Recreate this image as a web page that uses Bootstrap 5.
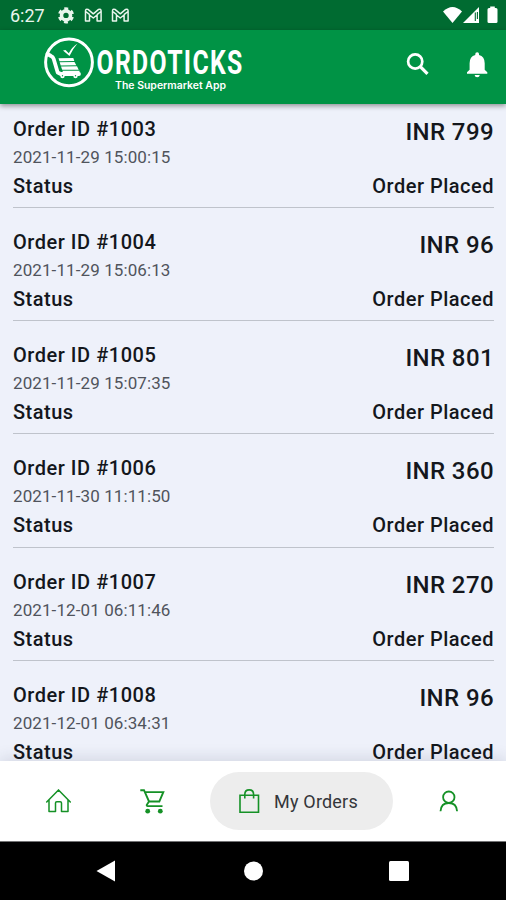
<!DOCTYPE html>
<html lang="en">
<head>
<meta charset="utf-8">
<meta name="viewport" content="width=device-width, initial-scale=1">
<title>Ordoticks - My Orders</title>
<link href="https://cdn.jsdelivr.net/npm/bootstrap@5.3.0/dist/css/bootstrap.min.css" rel="stylesheet">
<style>
body{font-family:Roboto,"Liberation Sans",sans-serif;background:#eef1fa;color:#14171c;height:900px}
svg{display:block;flex:none}
.sysbar{height:30px;background:#006b31;padding:0 8px 0 10px}
.clock{font-size:18px;line-height:30px;width:48px;padding-top:2px;color:#e9f5ed}
.appbar{height:74px;background:#009345;box-shadow:0 2px 5px rgba(0,0,0,.4);z-index:2}
.orders{padding:0 12px 0 13px}
.order{height:113.2px;border-bottom:1.500px solid #bfc3cb;padding-top:22px}
.order:first-child{height:104px;padding-top:12.800px}
.oid,.ostat{font-size:20px;font-weight:500;line-height:24px;letter-spacing:.53px}
.odate{font-size:17px;line-height:20px;margin:6px 0 7px;letter-spacing:.1px;color:#50545c}
.ostat{letter-spacing:.5px}
.amount{font-size:24px;font-weight:500;line-height:30px;margin-bottom:27px;letter-spacing:.4px}
.tabs{height:80px;background:#fff;box-shadow:0 -3px 14px rgba(40,50,80,.13);padding:11px 46px 0 45px;z-index:2}
.tabs a{height:58px}
.pill{background:#ededed;width:183px;padding-left:26px;color:#34363a;font-size:18px;letter-spacing:.2px}
.keys{height:59px;background:#000;border-top:1px solid #777;padding:0 97px 0 96px}
</style>
</head>
<body class="d-flex flex-column overflow-hidden">
<header class="sysbar d-flex align-items-center flex-shrink-0">
  <span class="clock">6:27</span>
  <svg width="74" height="30" viewBox="58 0 74 30">
    <g fill="none" stroke="#e9f5ed"><circle cx="66" cy="15.400" r="4.500" stroke-width="3.600"/><circle cx="66" cy="15.400" r="6.700" stroke-width="2.700" stroke-dasharray="3.800 3.216" stroke-dashoffset="-1.600"/>
    <g stroke-width="1.500" stroke-linejoin="round"><path id="mail" d="M85.500 21V11q0-2.500 2.500-1.600l5.300 4.400 5.300-4.400q2.500-.9 2.500 1.600v10h-4v-6l-3.800 3-3.800-3v6zM85.700 11.500l4 3.200M101 11.500l-4 3.200"/><use href="#mail" x="27"/></g></g>
  </svg>
  <svg class="ms-auto" width="58" height="30" viewBox="440 0 58 30" fill="#fff">
    <path d="M443 11.500Q452.500 2.500 462 11.500L452.500 23z"/>
    <path d="M463 23L479 7V23z"/><path d="M475.300 12.500V21M477.400 12V19" stroke="#006b31" stroke-width="1.100"/>
    <path d="M487.500 9.500q0-1.500 1.500-1.500h1.200V6.500h4.600V8h1.200q1.500 0 1.500 1.500v12.200q0 1.300-1.500 1.300h-7q-1.500 0-1.500-1.300z"/>
  </svg>
</header>
<nav class="appbar d-flex position-relative flex-shrink-0" aria-label="Ordoticks">
  <svg width="506" height="74" viewBox="0 30 506 74">
    <circle cx="69" cy="62.300" r="23.400" fill="none" stroke="#fff" stroke-width="3"/>
    <path d="M47.500 54l3.500 2q2 .7 2.700 3l4 13.500 3 1.500H79" fill="none" stroke="#fff" stroke-width="3.800" stroke-linecap="round" stroke-linejoin="round"/>
    <g fill="#fff"><path d="M58.500 58.300l14.800-.4 1 3.100-14.800.3zM59.700 62.300l14.800-.3 1.800 3.300-15.600.2zM61 66.500l16-.2 1.700 3.400-16.500.1zM62.500 70.800h17v2.100H63z"/><circle cx="62.500" cy="76" r="2.200"/><circle cx="75.500" cy="76" r="2.200"/><path d="M63 50.500l2.500-.5 3.300 3.300Q72 47 77.500 43.500 73 48.500 69.500 56z"/></g>
    <circle cx="62.500" cy="75.800" r=".7" fill="#009345"/><circle cx="75.500" cy="75.800" r=".7" fill="#009345"/>
    <text transform="translate(96.500 73.800) scale(.74 1)" font-size="33.500" font-weight="700" fill="#fff" textLength="197" lengthAdjust="spacing">ORDOTICKS</text>
    <text x="115" y="89.300" font-family="Inter,sans-serif" font-size="10" font-weight="600" fill="#fff" textLength="111" lengthAdjust="spacingAndGlyphs">The Supermarket App</text>
    <circle cx="415.200" cy="61.500" r="7.100" fill="none" stroke="#fff" stroke-width="2.700"/><path d="M420.300 66.600l7.200 7.300" stroke="#fff" stroke-width="3.200"/>
    <path fill="#fff" d="M467 73.700v-1.400l2.600-2.500v-6.600q0-6.600 5.700-8.200V54q0-1.800 1.900-1.800T479 54v1q5.700 1.600 5.700 8.200v6.600l2.600 2.500v1.400zM474.600 75h5.200q-.3 2.300-2.600 2.300t-2.600-2.300z"/>
  </svg>
</nav>
<main class="orders flex-fill overflow-hidden" id="orders"></main>
<nav class="tabs d-flex flex-shrink-0 position-relative">
  <a href="#" class="d-block" aria-label="Home"><svg width="27" height="58" viewBox="45 772 27 58" fill="none" stroke="#159126" stroke-width="1.500" stroke-linejoin="round" stroke-linecap="round"><path d="M46.700 802L58.500 789.900 70.300 802M49 800v11.500h6.500V803q0-1.300 1.300-1.300h3.400q1.300 0 1.300 1.300v8.500H68V800"/></svg></a>
  <a href="#" class="d-block" aria-label="Cart"><svg width="138" height="58" viewBox="72 772 138 58" fill="none" stroke="#159126" stroke-width="1.900"><path d="M140.300 790.200h3.700l5 11.300h10.300l4-9.400h-18.400M149 801.500l-2.200 3.300q-.4 1.300 1 1.300h14.700"/><g fill="#159126" stroke="none"><circle cx="147.700" cy="811.200" r="2.400"/><circle cx="160.300" cy="811.200" r="2.400"/></g></svg></a>
  <a href="#" class="pill rounded-pill d-flex align-items-center text-decoration-none"><svg width="38" height="58" viewBox="236 772 38 58" fill="none" stroke="#159126" stroke-width="1.600"><path d="M240 795.300h18.500v17H240zM244.800 798.500v-4q0-4.600 4.400-4.600t4.400 4.600v4"/></svg><span>My Orders</span></a>
  <a href="#" class="d-block ms-auto" aria-label="Profile"><svg width="22" height="58" viewBox="438 772 22 58" fill="none" stroke="#159126" stroke-width="1.800"><circle cx="448.800" cy="797.200" r="5.700"/><path d="M440.500 811.300q.5-8.300 8.300-8.300t8.300 8.300"/></svg></a>
</nav>
<footer class="keys d-flex justify-content-between align-items-center flex-shrink-0">
  <svg width="20" height="24" viewBox="0 0 20 24"><path d="M.5 12L19 1.500v21z" fill="#fff"/></svg>
  <svg width="20" height="20"><circle cx="10.500" cy="10" r="9.500" fill="#fff"/></svg>
  <svg width="20" height="20"><rect width="20" height="20" rx="1.500" fill="#fff"/></svg>
</footer>
<script src="https://cdn.jsdelivr.net/npm/bootstrap@5.3.0/dist/js/bootstrap.bundle.min.js"></script>
<script>
const orders = [
  [1003, "2021-11-29 15:00:15", 799],
  [1004, "2021-11-29 15:06:13", 96],
  [1005, "2021-11-29 15:07:35", 801],
  [1006, "2021-11-30 11:11:50", 360],
  [1007, "2021-12-01 06:11:46", 270],
  [1008, "2021-12-01 06:34:31", 96]
];
document.getElementById("orders").innerHTML = orders.map(([id, date, sum]) => `
  <article class="order d-flex justify-content-between">
    <div><div class="oid">Order ID #${id}</div><div class="odate">${date}</div><div class="ostat">Status</div></div>
    <div class="text-end"><div class="amount">INR ${sum}</div><div class="ostat">Order Placed</div></div>
  </article>`).join("");
</script>
</body>
</html>
